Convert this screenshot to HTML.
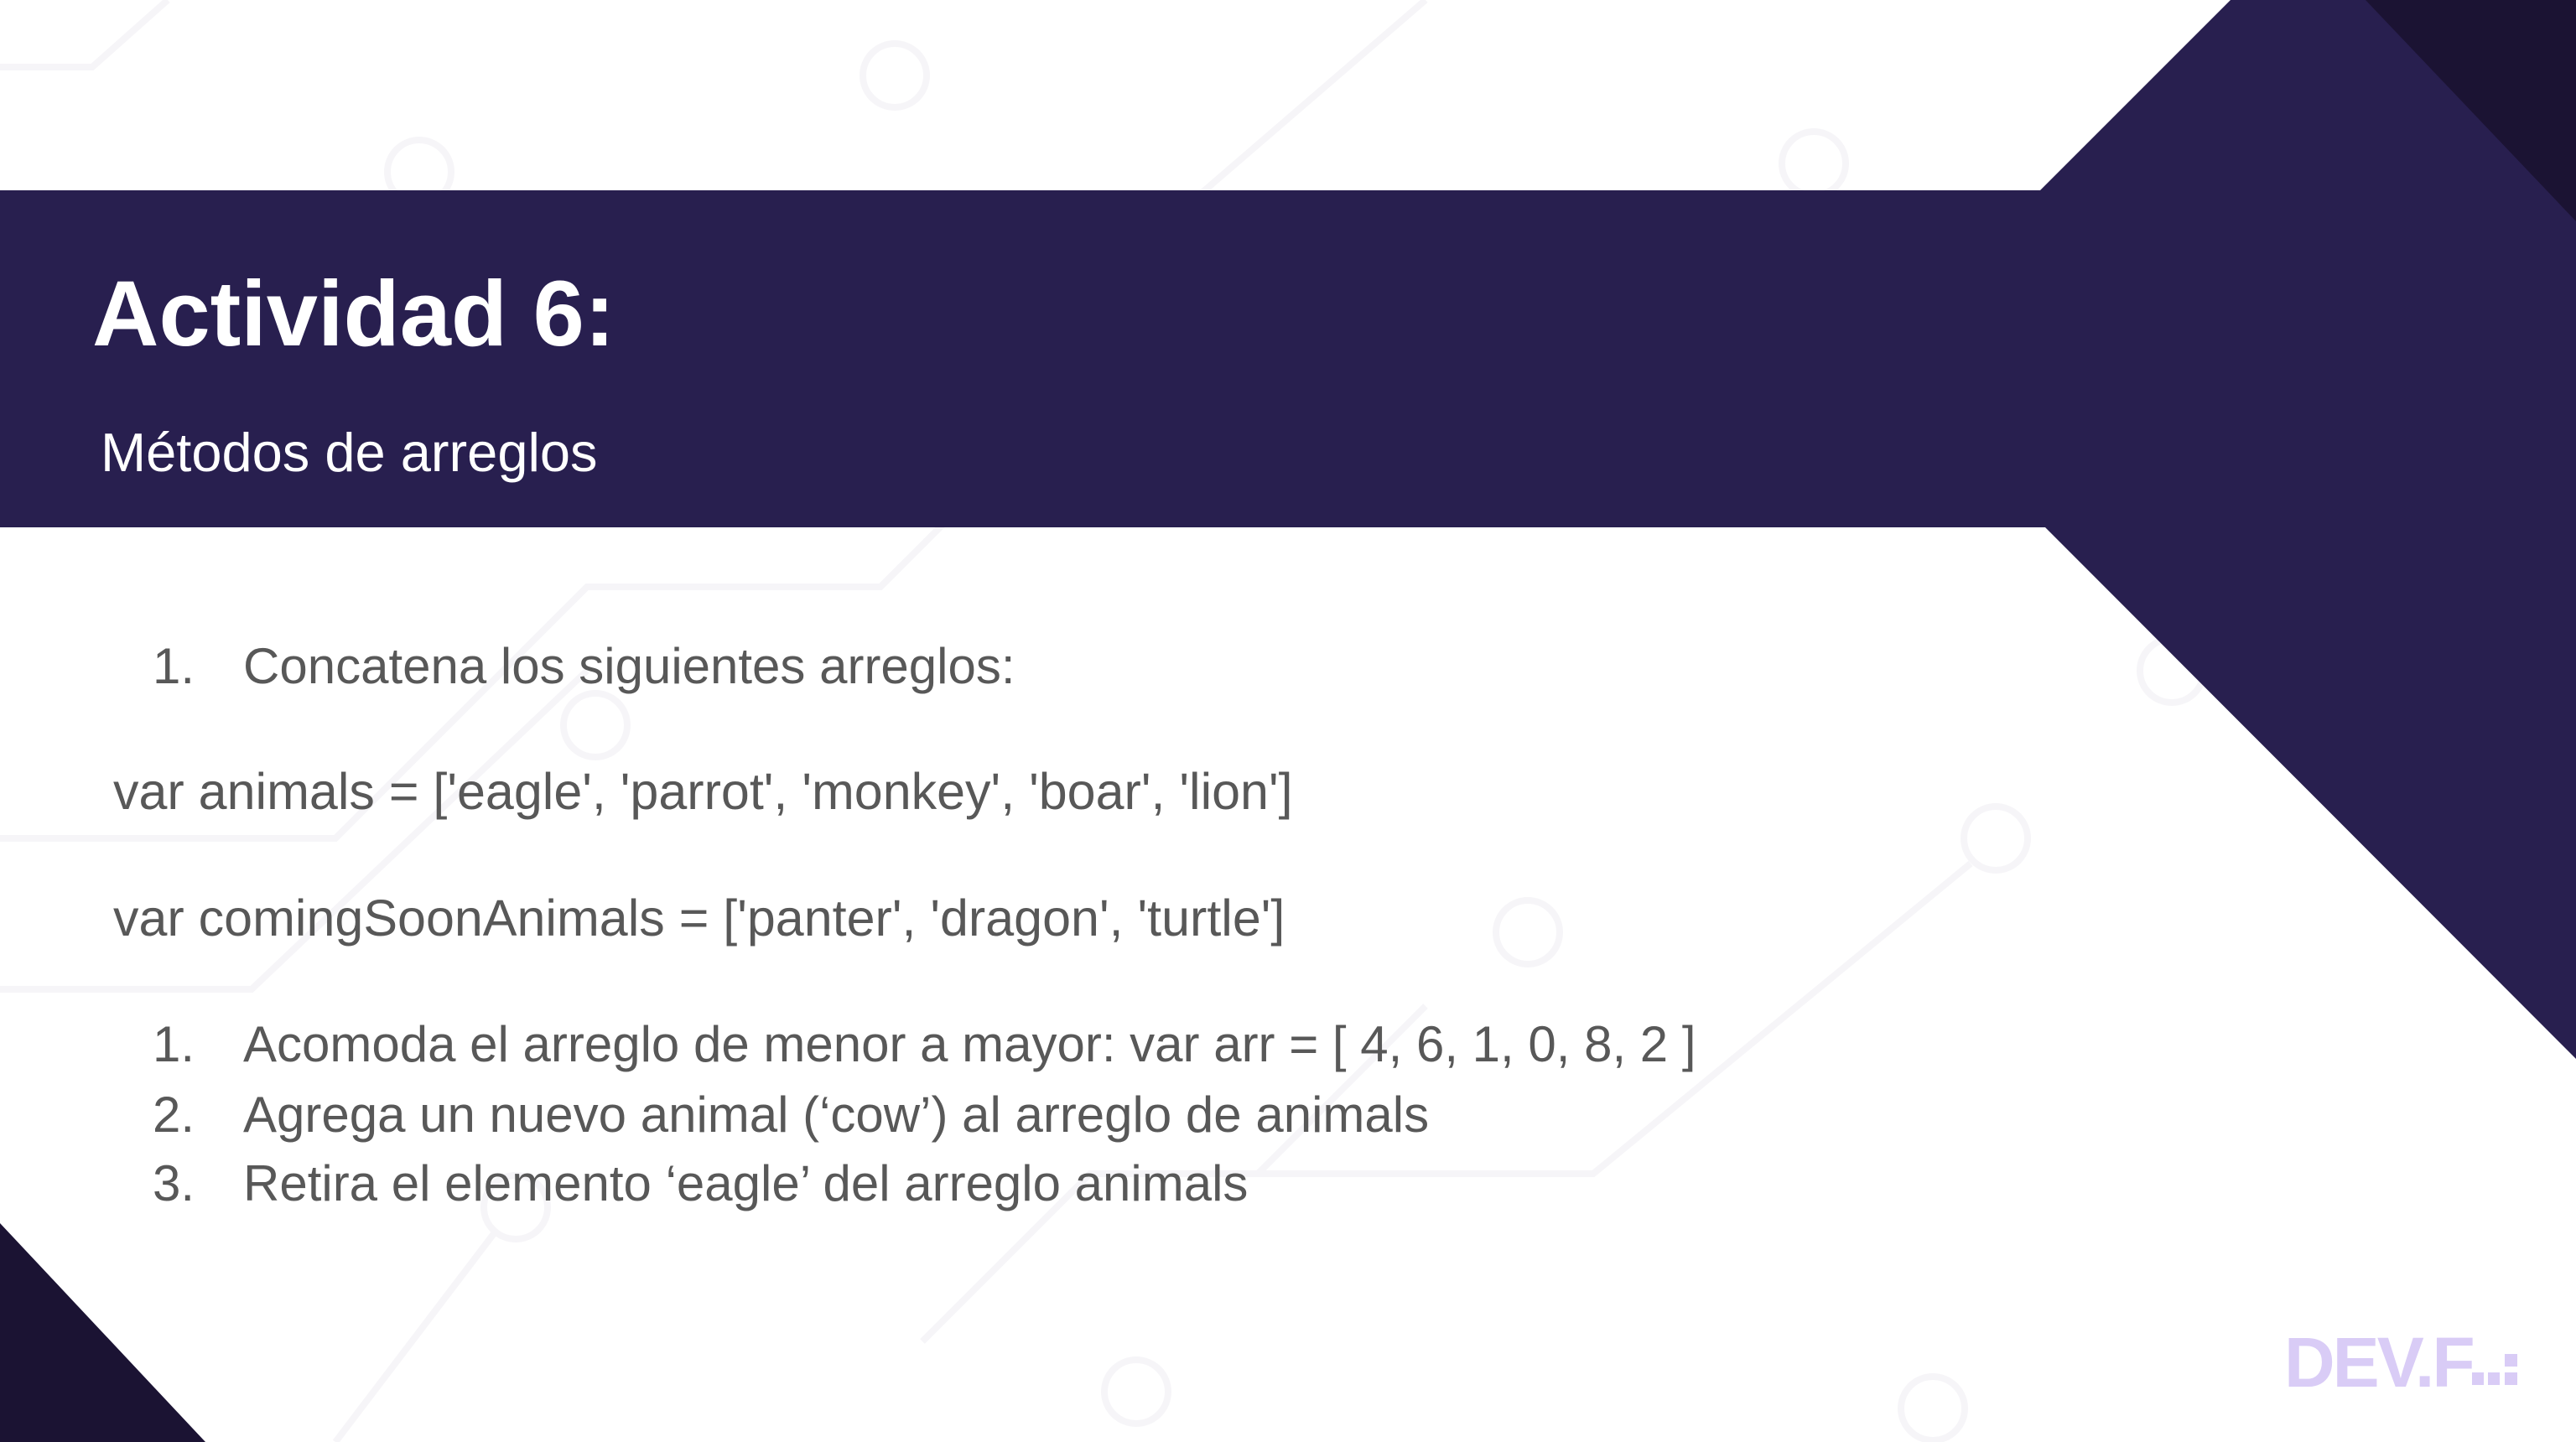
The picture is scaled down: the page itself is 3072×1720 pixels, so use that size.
<!DOCTYPE html>
<html><head><meta charset="utf-8"><style>
html,body{margin:0;padding:0}
body{width:3072px;height:1720px;position:relative;overflow:hidden;background:#fff;font-family:"Liberation Sans",sans-serif}
.t{position:absolute;white-space:nowrap;color:#585858;font-size:60px;line-height:1}
</style></head><body>
<svg width="3072" height="1720" style="position:absolute;left:0;top:0">
<g fill="none" stroke="#f6f5f8" stroke-width="8">
<path d="M0 80 L110 80 L200 0"/><circle cx="1067" cy="90" r="38"/><circle cx="500" cy="205" r="38"/>
<path d="M1410 250 L1700 0"/><circle cx="2163" cy="195" r="38"/>
<path d="M0 1000 L400 1000 L700 700 L1050 700 L1450 300"/><circle cx="710" cy="865" r="38"/>
<path d="M0 1180 L300 1180 L700 800"/><circle cx="1822" cy="1112" r="38"/>
<circle cx="2380" cy="1000" r="38"/><path d="M2350 1030 L1900 1400 L1300 1400 L1100 1600"/>
<circle cx="615" cy="1440" r="38"/><path d="M590 1470 L400 1720"/><circle cx="1355" cy="1660" r="38"/>
<circle cx="2305" cy="1680" r="38"/><path d="M1700 1200 L1500 1400"/>
<circle cx="2590" cy="800" r="38"/>
</g>
<polygon points="0,227 2433,227 2660,0 3072,0 3072,1263 2439,629 0,629" fill="#281f4f"/>
<polygon points="2821,0 3072,0 3072,264" fill="#1b1333"/>
<polygon points="0,1459 245,1720 0,1720" fill="#1b1333"/>
</svg>
<div class="t" style="left:110px;top:320px;font-size:110px;font-weight:bold;color:#fff">Actividad 6:</div>
<div class="t" style="left:120px;top:507px;font-size:65px;color:#fff">Métodos de arreglos</div>
<div class="t" style="left:182px;top:765px">1.</div>
<div class="t" style="left:290px;top:765px">Concatena los siguientes arreglos:</div>
<div class="t" style="left:135px;top:914px;font-size:61px">var animals = ['eagle', 'parrot', 'monkey', 'boar', 'lion']</div>
<div class="t" style="left:135px;top:1065px;font-size:61px">var comingSoonAnimals = ['panter', 'dragon', 'turtle']</div>
<div class="t" style="left:182px;top:1216px">1.</div>
<div class="t" style="left:290px;top:1216px">Acomoda el arreglo de menor a mayor: var arr = [ 4, 6, 1, 0, 8, 2 ]</div>
<div class="t" style="left:182px;top:1300px">2.</div>
<div class="t" style="left:290px;top:1300px">Agrega un nuevo animal (‘cow’) al arreglo de animals</div>
<div class="t" style="left:182px;top:1382px">3.</div>
<div class="t" style="left:290px;top:1382px">Retira el elemento ‘eagle’ del arreglo animals</div>
<div class="t" style="left:2724px;top:1583px;font-size:84px;font-weight:bold;color:#d9ccf6;letter-spacing:-3px">DEV.F</div>
<svg width="80" height="70" style="position:absolute;left:2940px;top:1590px" fill="#d9ccf6">
<rect x="8" y="47" width="14" height="15"/><rect x="27" y="47" width="14" height="15"/><rect x="47" y="25" width="15" height="15"/><rect x="47" y="47" width="15" height="15"/>
</svg>
</body></html>
